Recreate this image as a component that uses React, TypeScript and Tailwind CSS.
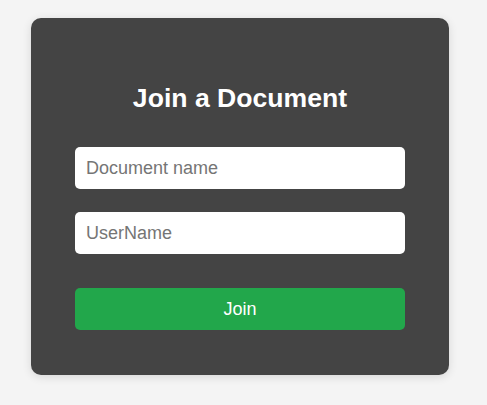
export default function App() {
  return (
    <div className="min-h-[405px] w-full bg-[#f4f4f4] pt-[18px] pl-[31px]" style={{ fontFamily: '"Liberation Sans", Arial, sans-serif' }}>
      <div className="w-[418px] h-[357px] rounded-[10px] bg-[#444444] shadow-[0_2px_10px_rgba(0,0,0,0.12)] px-[44px] pt-[65px] flex flex-col">
        <h2 className="text-white text-[26.6px] font-bold leading-[30px] text-center">Join a Document</h2>
        <input
          placeholder="Document name"
          className="mt-[34px] h-[42px] w-full rounded-[5px] bg-white px-[11px] text-[18px] text-[#222] placeholder:text-[#757575] outline-none"
        />
        <input
          placeholder="UserName"
          className="mt-[23px] h-[42px] w-full rounded-[5px] bg-white px-[11px] text-[18px] text-[#222] placeholder:text-[#757575] outline-none"
        />
        <button className="mt-[34px] h-[42px] w-full rounded-[5px] bg-[#22a74b] text-white text-[18px]">Join</button>
      </div>
    </div>
  );
}
